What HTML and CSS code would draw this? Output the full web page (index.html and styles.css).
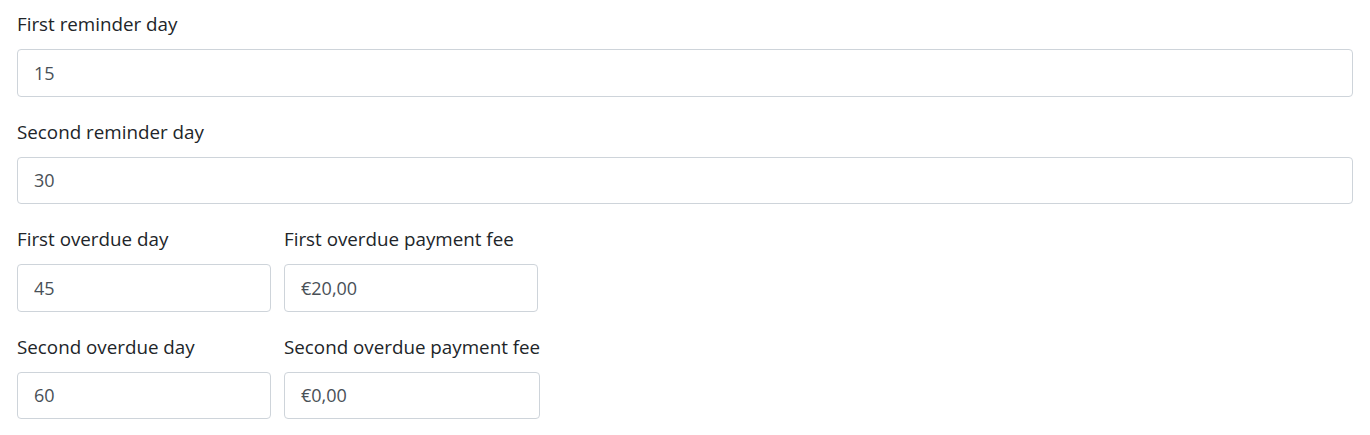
FILE: index.html
```html
<!DOCTYPE html>
<html lang="en">
<head>
  <meta charset="UTF-8" />
  <title>Reminder settings</title>
  <link rel="stylesheet" href="styles.css">
</head>
<body>

  <form class="settings-form">
    <div class="form-group">
      <label for="first-reminder">First reminder day</label>
      <input type="text" id="first-reminder" class="form-control" value="15">
    </div>

    <div class="form-group">
      <label for="second-reminder">Second reminder day</label>
      <input type="text" id="second-reminder" class="form-control" value="30">
    </div>

    <div class="form-row">
      <div class="form-group col">
        <label for="first-overdue">First overdue day</label>
        <input type="text" id="first-overdue" class="form-control" value="45">
      </div>
      <div class="form-group col">
        <label for="first-fee">First overdue payment fee</label>
        <input type="text" id="first-fee" class="form-control" value="€20,00">
      </div>
    </div>

    <div class="form-row">
      <div class="form-group col">
        <label for="second-overdue">Second overdue day</label>
        <input type="text" id="second-overdue" class="form-control" value="60">
      </div>
      <div class="form-group col">
        <label for="second-fee">Second overdue payment fee</label>
        <input type="text" id="second-fee" class="form-control" value="€0,00">
      </div>
    </div>
  </form>

</body>
</html>
```

FILE: styles.css
```css
body {
  font-family: 'Open Sans', 'Noto Sans', sans-serif;
  background: #fff;
  color: #212529;
  margin: 0;
  padding: 11px 17px 0 17px;
}

.settings-form {
  display: flex;
  flex-direction: column;
}

.form-group {
  display: flex;
  flex-direction: column;
  margin-bottom: 22px;
}

.form-group label {
  font-size: 18.8px;
  line-height: 27px;
  margin-bottom: 11px;
}

.form-control {
  box-sizing: border-box;
  height: 47.5px;
  padding: 0 16px;
  font-family: inherit;
  font-size: 18px;
  color: #495057;
  background: #fff;
  border: 1px solid #ced4da;
  border-radius: 4px;
  outline: none;
}

.form-row {
  display: flex;
  gap: 13px;
}

/* small fields: as wide as the label, but never under 254px */
.form-row .col {
  min-width: 254px;
}

.form-row .col .form-control {
  width: 0;
  min-width: 100%;
}
```
